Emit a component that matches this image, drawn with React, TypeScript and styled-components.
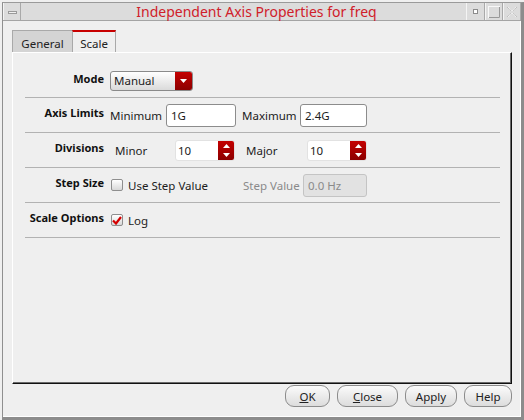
import React from "react";
import styled, { createGlobalStyle } from "styled-components";

const Global = createGlobalStyle`
  html, body { margin: 0; padding: 0; background: #efefef; }
  body {
    font-family: "Noto Sans", "Open Sans", "DejaVu Sans", sans-serif;
    font-size: 11.5px;
    color: #1c1c1c;
  }
  * { box-sizing: border-box; }
`;

const Screen = styled.div`
  width: 524px;
  height: 420px;
  padding: 2px 0 0 2px;
  background: #efefef;
`;

const Shell = styled.div`
  height: 100%;
  display: flex;
  flex-direction: column;
  border-left: 1px solid #8f8f8f;
  border-top: 1px solid #9a9a9a;
  border-right: 3px solid #8c8c8c;
  border-bottom: 3px solid #8c8c8c;
  box-shadow: inset -1px -1px 0 #ffffff;
`;

const TitleBar = styled.div`
  height: 18px;
  display: flex;
  background: #dcdcdc;
  border-bottom: 1px solid #a4a4a4;
`;

const BarButton = styled.div<{ $w: number }>`
  width: ${(p) => p.$w}px;
  height: 100%;
  display: flex;
  align-items: center;
  justify-content: center;
  background: #dcdcdc;
  border-left: 1px solid #f4f4f4;
  border-right: 1px solid #a9a9a9;
`;

const MenuBar = styled.div`
  width: 9px;
  height: 3px;
  margin-top: 1px;
  background: #f0f0f0;
  border: 1px solid #9a9a9a;
`;

const Title = styled.div`
  flex: 1;
  display: flex;
  align-items: center;
  justify-content: center;
  padding-left: 26px;
  font-size: 14px;
  color: #d0202a;
  white-space: nowrap;
`;

const Body = styled.div`
  flex: 1;
  display: flex;
  flex-direction: column;
  padding: 9px 9px 0 9px;
`;

const Tabs = styled.div`
  display: flex;
  height: 22px;
`;

const Tab = styled.div<{ $active?: boolean; $w: number }>`
  width: ${(p) => p.$w}px;
  height: 22px;
  padding-top: 3px;
  display: flex;
  align-items: center;
  justify-content: center;
  font-size: 11.5px;
  color: #222;
  background: ${(p) => (p.$active ? "#efefef" : "#d4d4d4")};
  border-left: 1px solid #a9a9a9;
  border-right: ${(p) => (p.$active ? "1px solid #a9a9a9" : "none")};
  border-top: ${(p) => (p.$active ? "2px solid #c80000" : "1px solid #a9a9a9")};
`;

const Panel = styled.div`
  flex: 1;
  display: flex;
  flex-direction: column;
  padding: 11px 11px 0 12px;
  border-top: 1px solid #ffffff;
  border-left: 1px solid #ffffff;
  border-right: 1px solid #111;
  border-bottom: 1px solid #111;
  box-shadow: inset -1px -1px 0 #6a6a6a;
`;

const Row = styled.div<{ $h?: number }>`
  height: ${(p) => p.$h ?? 35}px;
  display: flex;
  align-items: center;
  border-bottom: 1px solid #b2b2b2;
`;

const Label = styled.div`
  width: 79px;
  margin-right: 6px;
  padding-bottom: 5px;
  text-align: right;
  font-weight: bold;
  font-size: 11px;
  color: #111;
  white-space: nowrap;
`;

const Text = styled.div<{ $w?: number; $pl?: number; $ml?: number; $muted?: boolean }>`
  ${(p) => (p.$w ? `width: ${p.$w}px;` : "")}
  padding-left: ${(p) => p.$pl ?? 0}px;
  margin-left: ${(p) => p.$ml ?? 0}px;
  color: ${(p) => (p.$muted ? "#8a8a8a" : "#1c1c1c")};
  white-space: nowrap;
`;

const Select = styled.div`
  width: 83px;
  height: 20px;
  display: flex;
  border: 1px solid #8a8a8a;
  border-radius: 3px;
  overflow: hidden;
  background: linear-gradient(#ffffff, #dadada);
`;

const SelectText = styled.div`
  flex: 1;
  padding-left: 3px;
  display: flex;
  align-items: center;
`;

const RedCap = styled.div<{ $w: number }>`
  width: ${(p) => p.$w}px;
  display: flex;
  flex-direction: column;
  align-items: center;
  justify-content: center;
  background: linear-gradient(#c40000, #8c0000);
`;

const Input = styled.div<{ $w: number; $disabled?: boolean }>`
  width: ${(p) => p.$w}px;
  height: 23px;
  display: flex;
  align-items: center;
  padding-left: 4px;
  border: 1px solid ${(p) => (p.$disabled ? "#c4c4c4" : "#8c8c8c")};
  border-radius: 3px;
  background: ${(p) => (p.$disabled ? "#e2e2e2" : "#ffffff")};
  color: ${(p) => (p.$disabled ? "#8a8a8a" : "#1c1c1c")};
`;

const Spin = styled.div`
  width: 60px;
  height: 21px;
  display: flex;
  border: 1px solid #e2e2e2;
  border-radius: 3px;
  overflow: hidden;
  background: #ffffff;
`;

const SpinText = styled.div`
  flex: 1;
  padding-left: 2px;
  display: flex;
  align-items: center;
`;

const Check = styled.div`
  width: 12px;
  height: 12px;
  margin: 0 5px 0 1px;
  display: flex;
  align-items: center;
  justify-content: center;
  border: 1px solid #8e8e8e;
  border-radius: 2px;
  background: linear-gradient(#ffffff, #d8d8d8);
`;

const Footer = styled.div`
  height: 33px;
  display: flex;
  justify-content: flex-end;
  align-items: flex-start;
  gap: 7px;
  padding-top: 1px;
`;

const Button = styled.div<{ $w: number }>`
  width: ${(p) => p.$w}px;
  height: 22px;
  display: flex;
  align-items: center;
  justify-content: center;
  border: 1px solid #8c8c8c;
  border-radius: 9px;
  background: linear-gradient(#fbfbfb, #dcdcdc);
  color: #222;
`;

const U = styled.span`
  text-decoration: underline;
`;

const DownTri = () => (
  <svg width="7" height="4" viewBox="0 0 7 4">
    <path d="M0 0H7L3.5 4Z" fill="#fff" />
  </svg>
);
const UpTri = () => (
  <svg width="7" height="4" viewBox="0 0 7 4">
    <path d="M0 4H7L3.5 0Z" fill="#fff" />
  </svg>
);

const SpinBox = ({ value }: { value: string }) => (
  <Spin>
    <SpinText>{value}</SpinText>
    <RedCap $w={16} style={{ gap: 5 }}>
      <UpTri />
      <DownTri />
    </RedCap>
  </Spin>
);

export default function App() {
  return (
    <>
      <Global />
      <Screen>
        <Shell>
          <TitleBar>
            <BarButton $w={18}>
              <MenuBar />
            </BarButton>
            <Title>Independent Axis Properties for freq</Title>
            <BarButton $w={19}>
              <svg width="5" height="5" viewBox="0 0 5 5">
                <rect x="0.5" y="0.5" width="4" height="4" fill="#fff" stroke="#8c8c8c" />
              </svg>
            </BarButton>
            <BarButton $w={18}>
              <svg width="12" height="12" viewBox="0 0 12 12">
                <rect x="0.5" y="0.5" width="11" height="11" fill="none" stroke="#f8f8f8" />
                <path d="M11.5 1V11.5H1" fill="none" stroke="#999" />
              </svg>
            </BarButton>
            <BarButton $w={18}>
              <svg width="12" height="12" viewBox="0 0 12 12">
                <path
                  d="M1 1L5 5M11 1L7 5M1 11L5 7M11 11L7 7"
                  fill="none"
                  stroke="#b4b4b4"
                  strokeDasharray="1 1"
                />
                <path d="M2 1L6 5L10 1M2 11L6 7L10 11" fill="none" stroke="#f8f8f8" strokeDasharray="1 1" />
              </svg>
            </BarButton>
          </TitleBar>
          <Body>
            <Tabs>
              <Tab $w={60}>General</Tab>
              <Tab $w={44} $active>Scale</Tab>
            </Tabs>
            <Panel>
              <Row $h={34}>
                <Label>Mode</Label>
                <Select>
                  <SelectText>Manual</SelectText>
                  <RedCap $w={17}>
                    <DownTri />
                  </RedCap>
                </Select>
              </Row>
              <Row>
                <Label>Axis Limits</Label>
                <Text $w={56}>Minimum</Text>
                <Input $w={70}>1G</Input>
                <Text $w={58} $ml={6}>Maximum</Text>
                <Input $w={67}>2.4G</Input>
              </Row>
              <Row>
                <Label>Divisions</Label>
                <Text $w={65} $pl={5}>Minor</Text>
                <SpinBox value="10" />
                <Text $w={61} $ml={11}>Major</Text>
                <SpinBox value="10" />
              </Row>
              <Row>
                <Label>Step Size</Label>
                <Check />
                <Text $w={115}>Use Step Value</Text>
                <Text $w={60} $muted>Step Value</Text>
                <Input $w={64} $disabled>0.0 Hz</Input>
              </Row>
              <Row>
                <Label>Scale Options</Label>
                <Check>
                  <svg width="10" height="9" viewBox="0 0 10 9">
                    <path d="M1 4.5L4 7.5L9 1" fill="none" stroke="#d40000" strokeWidth="2.2" />
                  </svg>
                </Check>
                <Text>Log</Text>
              </Row>
            </Panel>
            <Footer>
              <Button $w={45}>
                <U>O</U>K
              </Button>
              <Button $w={61}>
                <U>C</U>lose
              </Button>
              <Button $w={52}>Apply</Button>
              <Button $w={48}>Help</Button>
            </Footer>
          </Body>
        </Shell>
      </Screen>
    </>
  );
}
